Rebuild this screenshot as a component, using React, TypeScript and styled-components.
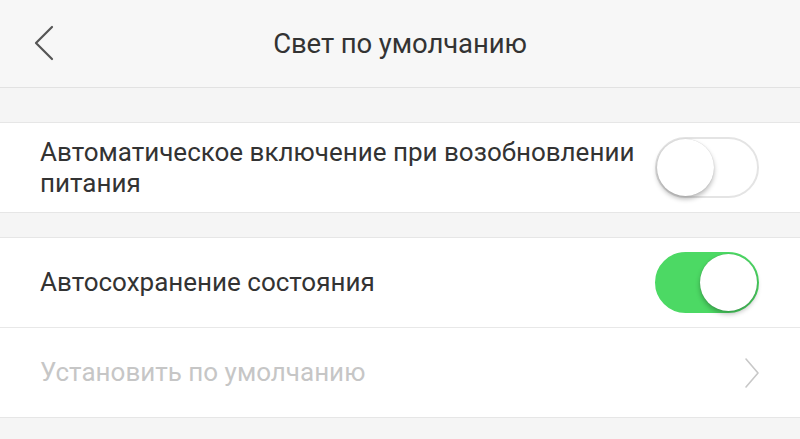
import React from 'react';
import styled, { createGlobalStyle } from 'styled-components';

const GlobalStyle = createGlobalStyle`
  html, body {
    margin: 0;
    padding: 0;
    background: #f5f5f5;
  }
  body {
    font-family: Roboto, "Noto Sans", "DejaVu Sans", sans-serif;
    -webkit-font-smoothing: antialiased;
  }
`;

interface SettingItem {
  label: string;
  kind: 'toggle' | 'link';
  on?: boolean;
  disabled?: boolean;
}

const GROUPS: SettingItem[][] = [
  [{ label: 'Автоматическое включение при возобновлении питания', kind: 'toggle', on: false }],
  [
    { label: 'Автосохранение состояния', kind: 'toggle', on: true },
    { label: 'Установить по умолчанию', kind: 'link', disabled: true },
  ],
];

const BackIcon = () => (
  <svg width="20" height="36" viewBox="0 0 20 36" fill="none">
    <path d="M18 2 L2 18 L18 34" stroke="#555" strokeWidth="2.2" strokeLinecap="round" strokeLinejoin="round" />
  </svg>
);

const ChevronIcon = () => (
  <svg width="16" height="32" viewBox="0 0 16 32" fill="none">
    <path d="M2 2 L14 16 L2 30" stroke="#c8c8c8" strokeWidth="1.6" strokeLinecap="round" strokeLinejoin="round" />
  </svg>
);

export default function App() {
  return (
    <>
      <GlobalStyle />
      <Page>
        <Header>
          <BackButton>
            <BackIcon />
          </BackButton>
          <Title>Свет по умолчанию</Title>
        </Header>
        {GROUPS.map((group, gi) => (
          <Group key={gi}>
            {group.map((item) => (
              <Row key={item.label}>
                <Label disabled={item.disabled}>{item.label}</Label>
                {item.kind === 'toggle' ? (
                  <Track on={!!item.on}>
                    <Knob on={!!item.on} />
                  </Track>
                ) : (
                  <ChevronIcon />
                )}
              </Row>
            ))}
          </Group>
        ))}
      </Page>
    </>
  );
}

const Page = styled.div`
  width: 800px;
  height: 439px;
  overflow: hidden;
  background: #f5f5f5;
  display: flex;
  flex-direction: column;
`;

const Header = styled.div`
  position: relative;
  height: 87px;
  background: #f7f7f7;
  border-bottom: 1px solid #e2e2e2;
  display: flex;
  align-items: center;
  justify-content: center;
  flex-shrink: 0;
`;

const BackButton = styled.div`
  position: absolute;
  left: 34px;
  top: 25px;
  display: flex;
`;

const Title = styled.div`
  font-size: 27.5px;
  color: #333;
  letter-spacing: -0.1px;
`;

const Group = styled.div`
  margin-top: 34px;
  background: #fff;
  border-top: 1px solid #e6e6e6;
  border-bottom: 1px solid #e6e6e6;
  flex-shrink: 0;

  & + & {
    margin-top: 24px;
  }
`;

const Row = styled.div`
  height: 89px;
  padding: 0 40px;
  display: flex;
  align-items: center;
  justify-content: space-between;
  gap: 16px;

  & + & {
    border-top: 1px solid #e8e8e8;
  }
`;

const Label = styled.div<{ disabled?: boolean }>`
  font-size: 26px;
  line-height: 31px;
  color: ${(p) => (p.disabled ? '#c6c6c6' : '#333')};
  max-width: 610px;
`;

const Track = styled.div<{ on: boolean }>`
  position: relative;
  width: 104px;
  height: 61px;
  box-sizing: border-box;
  border-radius: 31px;
  margin-right: 1px;
  flex-shrink: 0;
  background: ${(p) => (p.on ? '#4cd964' : '#fff')};
  border: 2px solid ${(p) => (p.on ? '#4cd964' : '#e4e4e4')};
`;

const Knob = styled.div<{ on: boolean }>`
  position: absolute;
  top: 0;
  left: ${(p) => (p.on ? '43px' : '0')};
  width: 57px;
  height: 57px;
  border-radius: 50%;
  background: #fff;
  box-shadow: 0 3px 5px rgba(0, 0, 0, 0.28), 0 0 1px rgba(0, 0, 0, 0.2);
`;
